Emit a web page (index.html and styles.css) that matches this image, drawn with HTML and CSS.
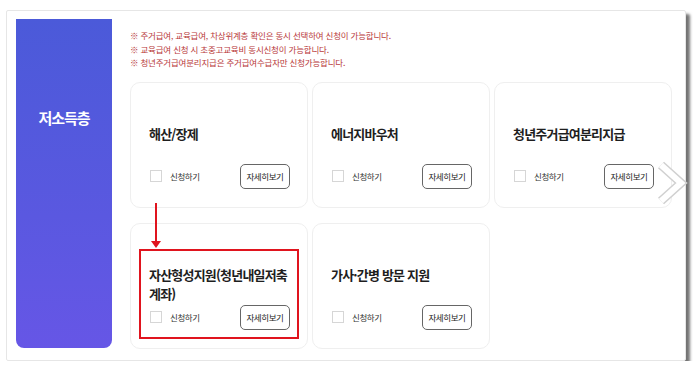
FILE: index.html
```html
<!DOCTYPE html>
<html lang="ko">

<head>
    <meta charset="UTF-8">
    <meta name="viewport" content="width=device-width, initial-scale=1.0">
    <title>저소득층</title>
    <link rel="stylesheet" href="styles.css">
</head>

<body>
    <div class="panel">
        <div class="side">
            <h2>저소득층</h2>
        </div>

        <div class="content">
            <ul class="notice">
                <li>※ 주거급여, 교육급여, 차상위계층 확인은 동시 선택하여 신청이 가능합니다.</li>
                <li>※ 교육급여 신청 시 초중고교육비 동시신청이 가능합니다.</li>
                <li>※ 청년주거급여분리지급은 주거급여수급자만 신청가능합니다.</li>
            </ul>

            <div class="cards">
                <div class="card">
                    <h3>해산/장제</h3>
                    <div class="card-foot">
                        <label class="check"><input type="checkbox"> 신청하기</label>
                        <button type="button">자세히보기</button>
                    </div>
                </div>
                <div class="card">
                    <h3>에너지바우처</h3>
                    <div class="card-foot">
                        <label class="check"><input type="checkbox"> 신청하기</label>
                        <button type="button">자세히보기</button>
                    </div>
                </div>
                <div class="card">
                    <h3>청년주거급여분리지급</h3>
                    <div class="card-foot">
                        <label class="check"><input type="checkbox"> 신청하기</label>
                        <button type="button">자세히보기</button>
                    </div>
                </div>
                <div class="card">
                    <h3>자산형성지원(청년내일저축<br>계좌)</h3>
                    <div class="card-foot">
                        <label class="check"><input type="checkbox"> 신청하기</label>
                        <button type="button">자세히보기</button>
                    </div>
                </div>
                <div class="card">
                    <h3>가사·간병 방문 지원</h3>
                    <div class="card-foot">
                        <label class="check"><input type="checkbox"> 신청하기</label>
                        <button type="button">자세히보기</button>
                    </div>
                </div>

                <!-- annotation overlays -->
                <div class="mark-arrow"></div>
                <div class="mark-box"></div>
                <svg class="next" width="32" height="44" viewBox="0 0 32 44">
                    <polyline points="5,4 25,22 5,40" fill="none" stroke="#d0d0d0" stroke-width="9" stroke-linejoin="miter" />
                    <polyline points="5,4 25,22 5,40" fill="none" stroke="#ffffff" stroke-width="6" stroke-linejoin="miter" />
                </svg>
            </div>
        </div>
    </div>
</body>

</html>
```

FILE: styles.css
```css
body {
    margin: 0;
    background: #fff;
    font-family: "Noto Sans CJK KR", "Noto Sans", sans-serif;
    color: #222;
}

.panel {
    display: flex;
    width: 669px;
    height: 328px;
    margin: 10px 0 0 6px;
    padding: 9px 0 12px 9px;
    background: #fff;
    border: 1px solid #e6e6e6;
    border-radius: 2px;
    box-shadow: 4px 4px 3px rgba(0, 0, 0, 0.55);
}

.side {
    width: 96px;
    flex-shrink: 0;
    margin-top: -1px;
    border-radius: 0 0 8px 8px;
    background: linear-gradient(180deg, #4b5ad9 0%, #5a58e0 60%, #6656e6 100%);
    display: flex;
    justify-content: center;
}

.side h2 {
    margin: 88px 0 0;
    color: #fff;
    font-size: 15px;
    font-weight: 700;
    letter-spacing: -1px;
}

.content {
    margin-left: 18px;
    padding-top: 9px;
}

.notice {
    list-style: none;
    margin: 0;
    padding: 0;
    color: #b8383a;
    font-size: 8.5px;
    line-height: 13.5px;
    letter-spacing: -0.2px;
}

.cards {
    position: relative;
    display: grid;
    grid-template-columns: repeat(3, 178px);
    grid-auto-rows: 126px;
    column-gap: 4px;
    row-gap: 15px;
    margin-top: 12px;
}

.card {
    display: flex;
    flex-direction: column;
    padding: 41px 17px 18px 18px;
    border: 1px solid #efefef;
    border-radius: 10px;
    box-sizing: border-box;
}

.card h3 {
    margin: 0;
    font-size: 13px;
    line-height: 19px;
    font-weight: 700;
    letter-spacing: -0.8px;
    color: #1e1e1e;
}

.card-foot {
    margin-top: auto;
    display: flex;
    justify-content: space-between;
    align-items: center;
}

.check {
    display: flex;
    align-items: center;
    font-size: 8.5px;
    letter-spacing: -0.4px;
    color: #333;
}

.check input {
    appearance: none;
    -webkit-appearance: none;
    width: 12px;
    height: 12px;
    margin: 0 8px 0 1px;
    border: 1px solid #d6d6d6;
    background: #fff;
}

.card-foot button {
    width: 50px;
    height: 25px;
    padding: 0;
    border: 1px solid #666;
    border-radius: 5px;
    background: #fff;
    font-family: inherit;
    font-size: 8.5px;
    letter-spacing: -0.4px;
    color: #222;
}

.mark-box {
    position: absolute;
    left: 9px;
    top: 167px;
    width: 156px;
    height: 86px;
    border: 2px solid #e0141e;
}

.mark-arrow {
    position: absolute;
    left: 25px;
    top: 121px;
    width: 2px;
    height: 39px;
    background: #e0141e;
}

.mark-arrow::after {
    content: "";
    position: absolute;
    left: -4px;
    bottom: -6px;
    border-left: 5px solid transparent;
    border-right: 5px solid transparent;
    border-top: 7px solid #e0141e;
}

.next {
    position: absolute;
    left: 526px;
    top: 79px;
}
```
